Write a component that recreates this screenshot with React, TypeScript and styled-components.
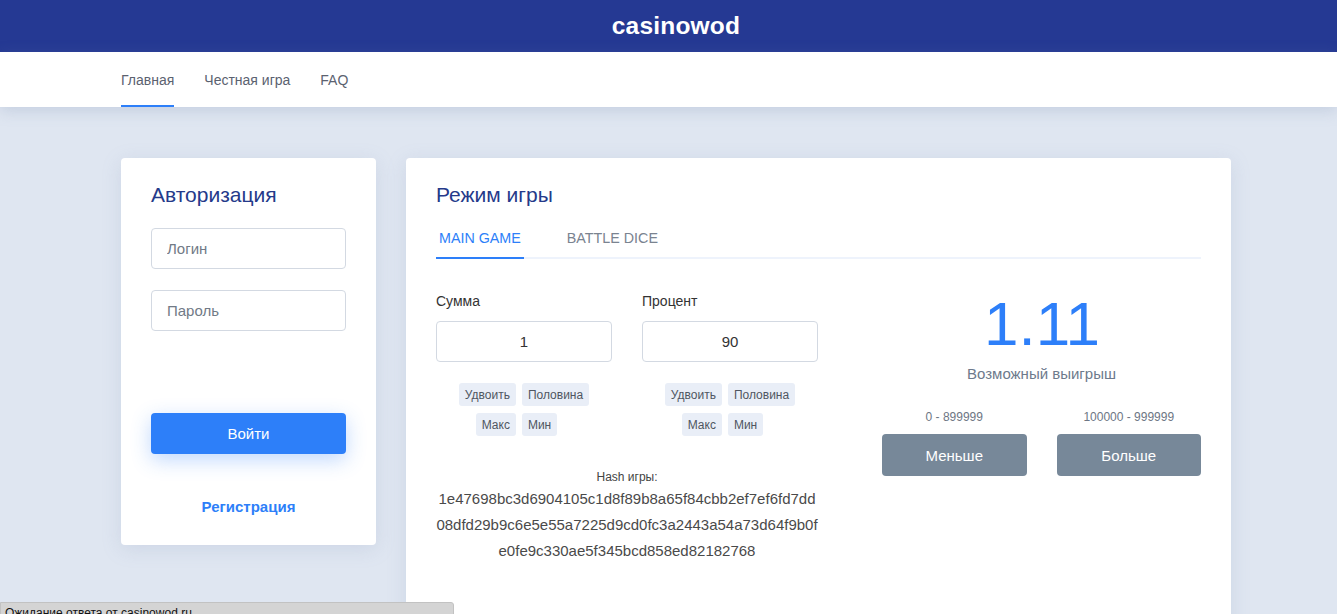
import React from 'react';
import styled, { createGlobalStyle } from 'styled-components';

const GlobalStyle = createGlobalStyle`
    html, body {
        margin: 0;
        padding: 0;
        background: #dfe6f1;
        font-family: "Liberation Sans", Arial, sans-serif;
        overflow: hidden;
    }
    * {
        box-sizing: border-box;
    }
`;

const Page = styled.div`
    min-height: 614px;
    background: #dfe6f1;
`;

const Header = styled.header`
    height: 52px;
    background: #253993;
    display: flex;
    align-items: center;
    justify-content: center;
    padding-left: 15px;
`;

const Logo = styled.div`
    color: #fff;
    font-size: 24.5px;
    font-weight: bold;
    letter-spacing: 0.2px;
`;

const NavBar = styled.nav`
    height: 55px;
    background: #fff;
    box-shadow: 0 4px 14px rgba(120, 140, 175, 0.25);
    padding-left: 15px;
`;

const Container = styled.div`
    width: 1140px;
    margin: 0 auto;
    padding: 0 15px;
    display: flex;
    height: 100%;
`;

const NavList = styled.div`
    display: flex;
    gap: 30px;
    height: 100%;
`;

const NavItem = styled.a<{ $active?: boolean }>`
    display: flex;
    align-items: center;
    font-size: 14px;
    color: #5b6270;
    text-decoration: none;
    border-bottom: 2px solid ${(p) => (p.$active ? '#2d7ff9' : 'transparent')};
    padding-top: 2px;
`;

const Main = styled.div`
    padding-left: 15px;
    padding-top: 51px;
`;

const Row = styled.div`
    width: 1140px;
    margin: 0 auto;
    display: flex;
`;

const Col = styled.div<{ $w: number }>`
    width: ${(p) => p.$w}px;
    padding: 0 15px;
`;

const Card = styled.div<{ $h?: number }>`
    background: #fff;
    border-radius: 4px;
    box-shadow: 0 4px 20px rgba(120, 140, 175, 0.18);
    padding: 25px 30px 29px;
    ${(p) => (p.$h ? `min-height: ${p.$h}px;` : '')}
`;

const CardTitle = styled.h2`
    margin: 0;
    font-size: 21px;
    line-height: 24px;
    font-weight: normal;
    color: #253a8a;
`;

const TextInput = styled.input`
    display: block;
    width: 100%;
    height: 41px;
    border: 1px solid #d3d9e2;
    border-radius: 4px;
    padding: 0 15px;
    font-family: inherit;
    font-size: 15px;
    color: #333;
    outline: none;
    &::placeholder {
        color: #717a86;
    }
`;

const LoginForm = styled.div`
    display: flex;
    flex-direction: column;
    gap: 21px;
    margin-top: 21px;
`;

const PrimaryButton = styled.button`
    display: block;
    width: 100%;
    height: 41px;
    margin-top: 82px;
    border: none;
    border-radius: 4px;
    background: #2d7ff9;
    color: #fff;
    font-family: inherit;
    font-size: 15px;
    box-shadow: 0 6px 20px rgba(45, 127, 249, 0.3);
`;

const RegisterLink = styled.a`
    display: block;
    margin-top: 44px;
    text-align: center;
    font-size: 15px;
    line-height: 18px;
    font-weight: bold;
    color: #2d7ff9;
`;

const Tabs = styled.div`
    display: flex;
    gap: 40px;
    margin-top: 13px;
    border-bottom: 2px solid #eef3fc;
`;

const Tab = styled.div<{ $active?: boolean }>`
    padding: 10px 3px 10px;
    margin-bottom: -2px;
    font-size: 14.3px;
    line-height: 17px;
    text-transform: uppercase;
    color: ${(p) => (p.$active ? '#2d7ff9' : '#7a8390')};
    border-bottom: 2px solid ${(p) => (p.$active ? '#2d7ff9' : 'transparent')};
`;

const GameBody = styled.div`
    display: flex;
`;

const LeftPart = styled.div`
    width: 382px;
    padding-top: 34px;
`;

const Fields = styled.div`
    display: flex;
    gap: 30px;
`;

const Field = styled.div`
    width: 176px;
`;

const FieldLabel = styled.div`
    font-size: 14px;
    line-height: 17px;
    color: #333;
    margin-bottom: 11px;
`;

const NumberInput = styled(TextInput)`
    text-align: center;
    color: #333;
`;

const Chips = styled.div`
    display: grid;
    grid-template-columns: auto auto;
    justify-content: center;
    gap: 7px 6px;
    margin-top: 21px;
`;

const Chip = styled.button<{ $side: 'left' | 'right' }>`
    justify-self: ${(p) => (p.$side === 'left' ? 'end' : 'start')};
    height: 23px;
    padding: 0 6px;
    border: none;
    border-radius: 3px;
    background: #e9eef7;
    color: #4f5661;
    font-family: inherit;
    font-size: 12px;
`;

const Hash = styled.div`
    margin-top: 34px;
    text-align: center;
    color: #444;
`;

const HashLabel = styled.div`
    font-size: 12px;
    line-height: 14px;
    color: #444;
`;

const HashValue = styled.div`
    margin-top: 2px;
    font-size: 15px;
    line-height: 26px;
    color: #4a4a4a;
`;

const RightPart = styled.div`
    flex: 1;
    padding-left: 64px;
    padding-top: 33px;
    display: flex;
    flex-direction: column;
    align-items: stretch;
`;

const Payout = styled.div`
    font-size: 62px;
    line-height: 63px;
    text-align: center;
    color: #2d7ff9;
    padding-left: 1px;
`;

const PayoutLabel = styled.div`
    margin-top: 10px;
    font-size: 15px;
    line-height: 18px;
    text-align: center;
    color: #6d7a8c;
`;

const Bets = styled.div`
    display: flex;
    gap: 30px;
    margin-top: 27px;
`;

const Bet = styled.div`
    flex: 1;
    display: flex;
    flex-direction: column;
    align-items: center;
`;

const Range = styled.div`
    font-size: 12px;
    line-height: 14px;
    color: #6d7684;
    margin-bottom: 10px;
`;

const BetButton = styled.button`
    width: 100%;
    height: 42px;
    border: none;
    border-radius: 4px;
    background: #778899;
    color: #fff;
    font-family: inherit;
    font-size: 15px;
`;

const StatusBar = styled.div`
    position: fixed;
    left: 0;
    bottom: -8px;
    width: 454px;
    height: 20px;
    background: #d4d4d4;
    border: 1px solid #c2c2c2;
    border-radius: 0 3px 0 0;
    font-family: "Liberation Sans", Arial, sans-serif;
    font-size: 12px;
    line-height: 16px;
    padding: 2px 4px;
    color: #111;
`;

const hash = [
    '1e47698bc3d6904105c1d8f89b8a65f84cbb2ef7ef6fd7dd',
    '08dfd29b9c6e5e55a7225d9cd0fc3a2443a54a73d64f9b0f',
    'e0fe9c330ae5f345bcd858ed82182768',
];

const ChipGroup: React.FC = () => (
    <Chips>
        <Chip $side="left">Удвоить</Chip>
        <Chip $side="right">Половина</Chip>
        <Chip $side="left">Макс</Chip>
        <Chip $side="right">Мин</Chip>
    </Chips>
);

export default function App() {
    return (
        <Page>
            <GlobalStyle />
            <Header>
                <Logo>casinowod</Logo>
            </Header>
            <NavBar>
                <Container>
                    <NavList>
                        <NavItem $active>Главная</NavItem>
                        <NavItem>Честная игра</NavItem>
                        <NavItem>FAQ</NavItem>
                    </NavList>
                </Container>
            </NavBar>
            <Main>
                <Row>
                    <Col $w={285}>
                        <Card>
                            <CardTitle>Авторизация</CardTitle>
                            <LoginForm>
                                <TextInput placeholder="Логин" />
                                <TextInput placeholder="Пароль" type="password" />
                            </LoginForm>
                            <PrimaryButton>Войти</PrimaryButton>
                            <RegisterLink>Регистрация</RegisterLink>
                        </Card>
                    </Col>
                    <Col $w={855}>
                        <Card $h={480}>
                            <CardTitle>Режим игры</CardTitle>
                            <Tabs>
                                <Tab $active>Main game</Tab>
                                <Tab>Battle dice</Tab>
                            </Tabs>
                            <GameBody>
                                <LeftPart>
                                    <Fields>
                                        <Field>
                                            <FieldLabel>Сумма</FieldLabel>
                                            <NumberInput defaultValue="1" />
                                            <ChipGroup />
                                        </Field>
                                        <Field>
                                            <FieldLabel>Процент</FieldLabel>
                                            <NumberInput defaultValue="90" />
                                            <ChipGroup />
                                        </Field>
                                    </Fields>
                                    <Hash>
                                        <HashLabel>Hash игры:</HashLabel>
                                        <HashValue>
                                            {hash.map((line) => (
                                                <div key={line}>{line}</div>
                                            ))}
                                        </HashValue>
                                    </Hash>
                                </LeftPart>
                                <RightPart>
                                    <Payout>1.11</Payout>
                                    <PayoutLabel>Возможный выигрыш</PayoutLabel>
                                    <Bets>
                                        <Bet>
                                            <Range>0 - 899999</Range>
                                            <BetButton>Меньше</BetButton>
                                        </Bet>
                                        <Bet>
                                            <Range>100000 - 999999</Range>
                                            <BetButton>Больше</BetButton>
                                        </Bet>
                                    </Bets>
                                </RightPart>
                            </GameBody>
                        </Card>
                    </Col>
                </Row>
            </Main>
            <StatusBar>Ожидание ответа от casinowod.ru</StatusBar>
        </Page>
    );
}
